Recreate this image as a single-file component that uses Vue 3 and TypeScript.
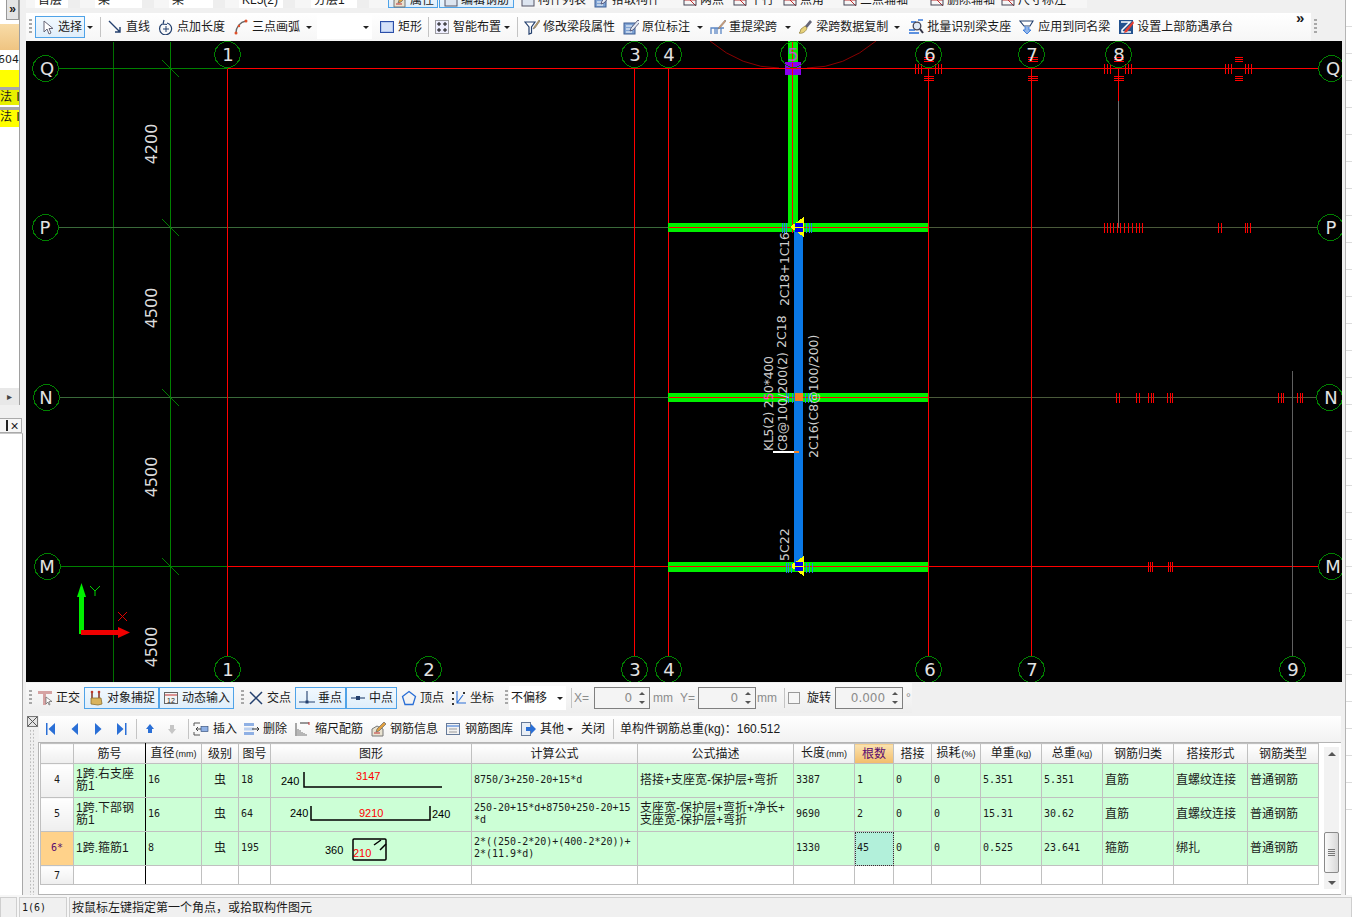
<template>
  <div class="app">
    <div class="body">
      <!-- left dock, mostly cut off by the window -->
      <aside class="rail">
        <div class="rail-top">
          <div class="rail-btn">»</div>
          <div class="rail-orange"></div>
          <div class="rail-num">604:</div>
          <div class="rail-yellow"></div>
          <div class="rail-law">法Ⅰ</div>
          <div class="rail-law">法Ⅰ</div>
          <div class="rail-fill"></div>
          <div class="rail-arrow">▸</div>
        </div>
        <div class="rail-tabs"><span class="rail-pin"></span><span class="rail-x">×</span></div>
        <div class="rail-panel"></div>
      </aside>

      <main class="main">
        <!-- toolbar above, only its bottom edge is in view -->
        <div class="cut-bar">
          <div class="cut-inner">
            <template v-for="(t, i) in topItems" :key="i">
              <div v-if="t.k === 'combo'" class="cut-combo" :style="{ marginLeft: t.ml + 'px', width: t.w + 'px' }">
                <span>{{ t.label }}</span><i></i>
              </div>
              <div v-else-if="t.k === 'btn'" class="tool on" :style="{ marginLeft: t.ml + 'px', width: t.w + 'px' }">
                <svg class="ico" viewBox="0 0 16 16" v-html="icons[t.icon!]"></svg><span>{{ t.label }}</span>
              </div>
              <div v-else class="tool" :style="{ marginLeft: t.ml + 'px' }">
                <svg class="ico" viewBox="0 0 16 16" v-html="icons[t.icon!]"></svg><span>{{ t.label }}</span>
              </div>
            </template>
          </div>
        </div>

        <div class="draw-wrap">
          <div class="bar draw-bar">
            <template v-for="(t, i) in drawItems" :key="i">
              <i v-if="t.k === 'grip'" class="grip" :style="{ marginLeft: t.ml + 'px' }"></i>
              <i v-else-if="t.k === 'sep'" class="sep" :style="{ marginLeft: t.ml + 'px' }"></i>
              <i v-else-if="t.k === 'caret'" class="caret" :style="{ marginLeft: t.ml + 'px' }"></i>
              <div v-else-if="t.k === 'combo'" class="combo" :style="{ marginLeft: t.ml + 'px', width: t.w + 'px' }"><span>{{ t.label }}</span><i class="caret"></i></div>
              <div v-else class="tool" :class="{ on: t.k === 'btn' }" :style="{ marginLeft: t.ml + 'px', width: t.w ? t.w + 'px' : undefined }">
                <svg class="ico" viewBox="0 0 16 16" v-html="icons[t.icon!]"></svg><span>{{ t.label }}</span>
              </div>
            </template>
            <span class="more">»</span>
          </div>
          <i class="grip end-grip"></i>
        </div>

        <!-- drawing area: coordinates in the viewBox are the page coordinates -->
        <svg class="cad" width="1316" height="641" viewBox="26 41 1316 641" shape-rendering="crispEdges">
          <rect x="26" y="41" width="1316" height="641" fill="#000" />

          <path d="M710 41 Q742 68 779 68 M807 68 Q844 68 876 41" fill="none" stroke="#8a0000" shape-rendering="auto" />

          <g transform="translate(.5 .5)">
            <line v-for="(l, i) in gridLines" :key="'g' + i" :x1="l[0]" :y1="l[1]" :x2="l[2]" :y2="l[3]" :stroke="l[4] as string" />
            <line v-for="y in [68, 227, 397, 566]" :key="'c' + y" x1="162" :y1="y - 8" x2="179" :y2="y + 9" stroke="#008000" />
          </g>

          <!-- beams -->
          <rect v-for="y in [223, 393, 562]" :key="'b' + y" x="668" :y="y" width="260" :height="y === 562 ? 10 : 9" fill="#00f000" />
          <rect x="788" y="41" width="10" height="186" fill="#00f000" />
          <g transform="translate(.5 .5)">
            <line v-for="y in [227, 397, 566]" :key="'r' + y" x1="668" :y1="y" x2="928" :y2="y" stroke="#ff0000" />
            <line x1="792" y1="41" x2="792" y2="232" stroke="#ff0000" />
          </g>
          <rect x="794" y="231" width="9" height="335" fill="#0a78e6" />
          <rect x="785" y="62" width="16" height="13" fill="#8a00f0" />
          <g transform="translate(.5 .5)">
            <line x1="785" y1="68" x2="801" y2="68" stroke="#ff0000" />
            <line x1="792" y1="62" x2="792" y2="75" stroke="#ff0000" />
          </g>
          <rect x="795" y="393" width="8" height="8" fill="#f58220" />
          <rect x="773" y="451" width="21" height="2" fill="#fff" />
          <rect x="794" y="451" width="5" height="2" fill="#f58220" />

          <g v-for="(j, i) in joints" :key="'j' + i">
            <polygon :points="`${j.x + 11},${j.y - 10} ${j.x + 11},${j.y + 10} ${j.x - 3},${j.y}`" fill="#ffff00" />
            <rect :x="j.x + 2" :y="j.y - 4" width="8" height="9" fill="#0000f0" />
            <rect :x="j.x + 2" :y="j.y" width="8" height="1" fill="#ffff00" />
          </g>
          <g transform="translate(.5 .5)">
            <line v-for="(l, i) in blueTicks" :key="'t' + i" :x1="l[0]" :y1="l[1]" :x2="l[0]" :y2="l[1] + 10" stroke="#2080e0" />
            <!-- red seat marks on the axes -->
            <line v-for="(l, i) in redTicks" :key="'rt' + i" :x1="l[0]" :y1="l[1]" :x2="l[2]" :y2="l[3]" stroke="#ff0000" />
            <!-- axis bubbles -->
            <polygon v-for="(a, i) in bubbles" :key="'a' + i" :points="ring(a.x, a.y)" fill="none" stroke="#008000" />
          </g>
          <text v-for="(a, i) in bubbles" :key="'at' + i" class="bubble" :x="a.tx ?? a.x" :y="a.y + 6.5" :fill="a.c ?? '#e2e2e2'">{{ a.t }}</text>

          <!-- dimensions -->
          <text v-for="d in dims" :key="d.y" class="dim" transform="rotate(-90)" :x="-d.y" y="157">{{ d.t }}</text>

          <!-- rebar labels -->
          <text v-for="(b, i) in beamLabels" :key="'l' + i" class="beam-label" :textLength="b.len" :transform="`translate(${b.x} ${b.y}) rotate(-90)`">{{ b.t }}</text>
          <text class="beam-label" textLength="95" transform="translate(773 451) rotate(-90)">KL5(2) 2<tspan fill="#ff3fd0">5</tspan>0*400</text>

          <!-- user coordinate marker -->
          <g shape-rendering="auto">
            <rect x="79" y="592" width="5" height="42" fill="#00f000" />
            <polygon points="81.5,583 86,597 77,597" fill="#00f000" />
            <rect x="81" y="630" width="38" height="5" fill="#f00000" />
            <polygon points="130,632.5 118,627 118,638" fill="#f00000" />
            <path d="M90 586l5 5 5-5M95 591v5" fill="none" stroke="#00d000" />
            <path d="M118 612l9 9M127 612l-9 9" fill="none" stroke="#e00000" />
          </g>
        </svg>

        <div class="snap-row">
          <div class="bar snap-bar">
            <template v-for="(t, i) in snapItems" :key="i">
              <i v-if="t.k === 'grip'" class="grip" :style="{ marginLeft: t.ml + 'px' }"></i>
              <i v-else-if="t.k === 'sep'" class="sep" :style="{ marginLeft: t.ml + 'px' }"></i>
              <div v-else-if="t.k === 'combo'" class="combo" :style="{ marginLeft: t.ml + 'px', width: t.w + 'px' }"><span>{{ t.label }}</span><i class="caret"></i></div>
              <div v-else-if="t.k === 'input'" class="spin" :style="{ marginLeft: t.ml + 'px', width: t.w + 'px' }">
                <span>{{ t.label }}</span>
                <div class="spin-arrows"><i></i><i></i></div>
              </div>
              <span v-else-if="t.k === 'gray'" class="gray" :style="{ marginLeft: t.ml + 'px' }">{{ t.label }}</span>
              <span v-else-if="t.k === 'text'" class="plain" :style="{ marginLeft: t.ml + 'px' }">{{ t.label }}</span>
              <i v-else-if="t.k === 'check'" class="check" :style="{ marginLeft: t.ml + 'px' }"></i>
              <div v-else class="tool" :class="{ on: t.k === 'btn' }" :style="{ marginLeft: t.ml + 'px', width: t.w ? t.w + 'px' : undefined }">
                <svg class="ico" viewBox="0 0 16 16" v-html="icons[t.icon!]"></svg><span>{{ t.label }}</span>
              </div>
            </template>
          </div>
        </div>

        <section class="rebar">
          <div class="gutter">
            <svg class="gutter-x" viewBox="0 0 11 11"><rect x=".5" y=".5" width="10" height="10" fill="#e4e4e4" stroke="#777" /><path d="M1 1l9 9M10 1l-9 9" stroke="#555" fill="none" /></svg>
            <div class="gutter-dots"></div>
          </div>
          <div class="rebar-body">
            <div class="bar rebar-bar">
              <template v-for="(t, i) in rebarItems" :key="i">
                <i v-if="t.k === 'sep'" class="sep" :style="{ marginLeft: t.ml + 'px' }"></i>
                <i v-else-if="t.k === 'caret'" class="caret" :style="{ marginLeft: t.ml + 'px' }"></i>
                <span v-else-if="t.k === 'text'" class="plain" :style="{ marginLeft: t.ml + 'px' }">{{ t.label }}</span>
                <div v-else class="tool" :style="{ marginLeft: t.ml + 'px' }">
                  <svg class="ico" viewBox="0 0 16 16" v-html="icons[t.icon!]"></svg><span v-if="t.label">{{ t.label }}</span>
                </div>
              </template>
            </div>

            <div class="grid-frame">
              <table class="grid">
                <colgroup>
                  <col v-for="(w, i) in colWidths" :key="i" :style="{ width: w + 'px' }" />
                </colgroup>
                <thead>
                  <tr>
                    <th></th>
                    <th class="dark-r">筋号</th>
                    <th>直径<small>(mm)</small></th>
                    <th>级别</th>
                    <th>图号</th>
                    <th>图形</th>
                    <th>计算公式</th>
                    <th>公式描述</th>
                    <th>长度<small>(mm)</small></th>
                    <th class="hot">根数</th>
                    <th>搭接</th>
                    <th>损耗<small>(%)</small></th>
                    <th>单重<small>(kg)</small></th>
                    <th>总重<small>(kg)</small></th>
                    <th>钢筋归类</th>
                    <th>搭接形式</th>
                    <th>钢筋类型</th>
                  </tr>
                </thead>
                <tbody>
                  <tr v-for="r in rows" :key="r.id" class="data-row">
                    <td class="idx" :class="{ current: r.current }">{{ r.current ? r.id + '*' : r.id }}</td>
                    <td class="name dark-r">{{ r.name }}</td>
                    <td class="num">{{ r.dia }}</td>
                    <td class="grade">虫</td>
                    <td class="num">{{ r.fig }}</td>
                    <td class="shape">
                      <svg v-if="r.id === 4" width="200" height="33" viewBox="271 763 200 33">
                        <text class="s-black" x="281" y="784">240</text>
                        <path d="M304 771v15h138" fill="none" stroke="#000" stroke-width="1.5" />
                        <text class="s-red" x="356" y="779">3147</text>
                      </svg>
                      <svg v-if="r.id === 5" width="200" height="33" viewBox="271 797 200 33">
                        <text class="s-black" x="290" y="816">240</text>
                        <path d="M311 805v14h119v-14" fill="none" stroke="#000" stroke-width="1.5" />
                        <text class="s-red" x="359" y="816">9210</text>
                        <text class="s-black" x="432" y="817">240</text>
                      </svg>
                      <svg v-if="r.id === 6" width="200" height="33" viewBox="271 831 200 33">
                        <text class="s-black" x="325" y="853">360</text>
                        <rect x="353" y="838" width="33" height="21" rx="1" fill="none" stroke="#000" stroke-width="1.5" />
                        <path d="M374 844l7-5M380 849l6-6" fill="none" stroke="#000" stroke-width="1.5" />
                        <text class="s-red" x="353" y="856">210</text>
                      </svg>
                    </td>
                    <td class="formula">{{ r.formula }}</td>
                    <td class="desc">{{ r.desc }}</td>
                    <td class="num">{{ r.len }}</td>
                    <td class="num" :class="{ picked: r.current }">{{ r.count }}</td>
                    <td class="num">0</td>
                    <td class="num">0</td>
                    <td class="num">{{ r.unit }}</td>
                    <td class="num">{{ r.total }}</td>
                    <td class="cn">{{ r.kind }}</td>
                    <td class="cn">{{ r.joint }}</td>
                    <td class="cn">普通钢筋</td>
                  </tr>
                  <tr class="blank-row">
                    <td class="idx">7</td>
                    <td class="dark-r"></td>
                    <td v-for="n in 15" :key="n"></td>
                  </tr>
                </tbody>
              </table>
              <div class="vscroll">
                <i class="up"></i>
                <div class="thumb"><b></b></div>
                <i class="down"></i>
              </div>
            </div>
          </div>
        </section>
      </main>

      <aside class="right-rail"><i v-for="n in 30" :key="n"></i></aside>
    </div>

    <footer class="status">
      <div class="seg seg-a"></div>
      <div class="seg seg-b">1(6)</div>
      <div class="seg seg-c">按鼠标左键指定第一个角点，或拾取构件图元</div>
    </footer>
  </div>
</template>

<script setup lang="ts">
interface Item {
  k: string
  ml: number
  w?: number
  icon?: string
  label?: string
}

const navy = '#24406e'
const blue = '#2a6fd6'

// small toolbar pictures, all drawn on a 16x16 box
const icons: Record<string, string> = {
  cursor: '<path d="M5 2v11l3-3 2 5 2-1-2-4.500h4z" fill="#fff" stroke="#667"/>',
  line: `<path d="M2 2l11 11M13 8v5H8" fill="none" stroke="${navy}" stroke-width="1.400"/>`,
  addlen: `<path d="M4 5A6 6 0 1 0 9 4M6 1L5 5l4 .5" fill="none" stroke="${navy}" stroke-width="1.200"/><path d="M8 7v6M5 10h6" stroke="${navy}"/>`,
  arc: '<path d="M3 14C3 8 7 3 13 2" fill="none" stroke="#666" stroke-width="1.400"/><circle cx="3" cy="14" r="1.500" fill="#e0502a"/><circle cx="13" cy="2" r="1.500" fill="#e0502a"/><circle cx="6" cy="7" r="1.200" fill="#e0502a"/>',
  rect: '<rect x="1.500" y="2.500" width="13" height="11" fill="#b4c9f0" stroke="#2c4fa8"/><rect x="3" y="4" width="10" height="8" fill="#d5e1f8"/>',
  smart: '<rect x="1.500" y="1.500" width="13" height="13" fill="#eef" stroke="#444" stroke-dasharray="1 1"/><path d="M5 3v4M3 5h4M11 3v4M9 5h4M5 9v4M3 11h4M11 9v4M9 11h4" stroke="#111"/>',
  funnel: `<path d="M1 3h10L7.500 8v6L5 15V8z" fill="#fff" stroke="${navy}" stroke-width="1.200"/><path d="M15 1l-5 7-1 2 2-1 5-7z" fill="#c9a15c" stroke="#666" stroke-width=".6"/>`,
  mark: '<rect x="1" y="4" width="11" height="11" fill="#7fa3d4" stroke="#3f5f94"/><path d="M3 7h6M3 10h6M3 13h6" stroke="#fff"/><path d="M15 1L8 9l-1 3 3-1 7-8z" fill="#e4eaf4" stroke="#446" stroke-width=".8"/>',
  respan: '<path d="M1 15V9h4v6M7 15V9h4v6M1 9h13" fill="none" stroke="#5b86c4" stroke-width="1.300"/><path d="M15 1L9 8l-1 2 2-1 6-7z" fill="#e0a070" stroke="#777" stroke-width=".6"/>',
  brush: '<path d="M13 1l2 2-5 6-2-2z" fill="#667"/><path d="M8 7l2 2c-1 4-5 6-8 5 2-1 1-3 2-4z" fill="#e8d27a" stroke="#8a7a3a" stroke-width=".7"/>',
  batch: `<path d="M1 14h10M1 11h6M3 3h5" stroke="${blue}" stroke-width="1.400"/><circle cx="9" cy="7" r="3.800" fill="#dfe8f4" stroke="#445" stroke-width="1.300"/><path d="M12 10l3 4" stroke="#334" stroke-width="2"/><path d="M10 1h5" stroke="${blue}" stroke-width="1.400"/>`,
  same: `<path d="M1 2h13l-3 5H5z" fill="#fff" stroke="${navy}" stroke-width="1.100"/><path d="M6 7v4H4l4 4 4-4h-2V8" fill="#8fb4ea" stroke="${blue}" stroke-width=".8"/>`,
  top: '<rect x="1" y="1" width="14" height="14" fill="#23528f"/><path d="M3 3h9L4 11v2h9" fill="none" stroke="#fff" stroke-width="1.500"/><path d="M15 2L7 11l-1 3 3-1 7-9z" fill="#e23b30"/>',
  ortho: '<path d="M1 1h14v3H9v11H6V4H1z" fill="#d6a3a3"/><path d="M9 7v7l2-2 1 3 1-.5-1-3h3z" fill="#fff" stroke="#666" stroke-width=".7"/>',
  magnet: '<path d="M4 1v7M11 1v7" stroke="#8a4030" stroke-width="1.600"/><circle cx="4" cy="2" r="1.300" fill="#c0392b"/><circle cx="11" cy="2" r="1.300" fill="#c0392b"/><path d="M3 8h10l1 6-4 1-7-1z" fill="#d9b35c" stroke="#8a6f2f" stroke-width=".8"/>',
  dyn: '<rect x="1.500" y="2.500" width="13" height="11" fill="#f4f4f4" stroke="#666"/><path d="M2 5h12" stroke="#c03030"/><text x="8" y="12.500" text-anchor="middle" font-size="7" font-family="Liberation Sans" fill="#222">12</text>',
  cross: `<path d="M2 2l12 12M14 2L2 14" stroke="${navy}" stroke-width="1.500"/>`,
  foot: `<path d="M8 1v11M0 12h16" stroke="${navy}" stroke-width="1.100"/><rect x="6.500" y="10.500" width="3" height="3" fill="${navy}"/>`,
  mid: `<path d="M1 8h14" stroke="${navy}" stroke-width="1.100"/><rect x="6" y="6" width="4" height="4" fill="${navy}"/>`,
  apex: `<path d="M8 1.500l6.500 5-2.500 8H4L1.500 6.500z" fill="none" stroke="${blue}" stroke-width="1.300"/>`,
  coord: `<path d="M6 1v12h9M6 13l6-8" fill="none" stroke="${blue}" stroke-width="1.100"/><g fill="#333"><rect x="1" y="2" width="2" height="2"/><rect x="1" y="8" width="2" height="2"/><rect x="1" y="13" width="2" height="2"/><rect x="12" y="2" width="2" height="2"/></g>`,
  first: `<path d="M4 2h1.500v12H4zM13 2v12L6.500 8z" fill="${blue}"/>`,
  prev: `<path d="M11 2v12L4.500 8z" fill="${blue}"/>`,
  next: `<path d="M5 2v12l6.500-6z" fill="${blue}"/>`,
  last: `<path d="M11 2h1.500v12H11zM3 2v12l6.500-6z" fill="${blue}"/>`,
  up: `<path d="M8 3l4 5h-2v4H6V8H4z" fill="${blue}"/>`,
  down: '<path d="M8 13l4-5h-2V4H6v4H4z" fill="#c6c6c6"/>',
  insert: `<path d="M1 2h6M1 14h6M1 2v3M1 11v3" stroke="#555" fill="none"/><path d="M8 8H3M5 6L3 8l2 2" stroke="#444" fill="none"/><rect x="8" y="5.500" width="7" height="5" fill="#8fb0e4" stroke="${navy}" stroke-width=".6"/>`,
  remove: '<rect x="1" y="2" width="10" height="3" fill="#8fb0e4"/><rect x="1" y="6.500" width="10" height="3" fill="#bcd0ee"/><rect x="1" y="11" width="10" height="3" fill="#8fb0e4"/><path d="M9 8h7M14 6l2 2-2 2" stroke="#333" fill="none"/>',
  scale: '<path d="M1 2v13" fill="none" stroke="#555"/><path d="M3 15V8M5 15V9M7 15v-4M9 15v-3M11 15v-2" stroke="#777"/><path d="M5 2h9" stroke="#333"/><path d="M14 1v3" stroke="#c03030"/>',
  info: '<path d="M2 15V8l5-3 6 3v7z" fill="#e8e2d0" stroke="#777"/><path d="M14 1L7 8l-1 3 3-1 7-7z" fill="#e0a040" stroke="#666" stroke-width=".7"/><path d="M4 12h6" stroke="#c03030"/>',
  lib: `<rect x="1.500" y="2.500" width="13" height="11" fill="#f2f2f2" stroke="#667a99"/><path d="M2 5h12" stroke="${blue}"/><path d="M4 8h8M4 11h8" stroke="#999"/>`,
  other: `<rect x="1.500" y="1.500" width="9" height="13" fill="#e8eef6" stroke="#667a99"/><path d="M6 6h5V3l5 5-5 5v-3H6z" fill="${blue}"/>`,
  thin: '<rect x="2" y="2" width="12" height="12" fill="#dde5f0" stroke="#556"/>',
  draw: '<path d="M2 2l12 12M2 8h12" stroke="#c03030"/><rect x="2" y="3" width="12" height="10" fill="none" stroke="#445"/>',
}

const topItems: Item[] = [
  { k: 'combo', ml: 9, w: 45, label: '首层' },
  { k: 'combo', ml: 15, w: 59, label: '梁' },
  { k: 'combo', ml: 15, w: 56, label: '梁' },
  { k: 'combo', ml: 14, w: 56, label: 'KL5(2)' },
  { k: 'combo', ml: 16, w: 58, label: '分层1' },
  { k: 'btn', ml: 19, w: 50, icon: 'info', label: '属性' },
  { k: 'btn', ml: 1, w: 75, icon: 'thin', label: '编辑钢筋' },
  { k: 'tool', ml: 6, icon: 'thin', label: '构件列表' },
  { k: 'tool', ml: 8, icon: 'mark', label: '拾取构件' },
  { k: 'tool', ml: 22, icon: 'draw', label: '两点' },
  { k: 'tool', ml: 8, icon: 'draw', label: '平行' },
  { k: 'tool', ml: 8, icon: 'draw', label: '点角' },
  { k: 'tool', ml: 18, icon: 'draw', label: '三点辅轴' },
  { k: 'tool', ml: 21, icon: 'draw', label: '删除辅轴' },
  { k: 'tool', ml: 5, icon: 'draw', label: '尺寸标注' },
]

const drawItems: Item[] = [
  { k: 'grip', ml: 3 },
  { k: 'btn', ml: 3, w: 50, icon: 'cursor', label: '选择' },
  { k: 'caret', ml: 2 },
  { k: 'sep', ml: 7 },
  { k: 'tool', ml: 6, icon: 'line', label: '直线' },
  { k: 'tool', ml: 8, icon: 'addlen', label: '点加长度' },
  { k: 'tool', ml: 8, icon: 'arc', label: '三点画弧' },
  { k: 'caret', ml: 6 },
  { k: 'combo', ml: 5, w: 55, label: '' },
  { k: 'tool', ml: 7, icon: 'rect', label: '矩形' },
  { k: 'sep', ml: 6 },
  { k: 'tool', ml: 5, icon: 'smart', label: '智能布置' },
  { k: 'caret', ml: 3 },
  { k: 'sep', ml: 7 },
  { k: 'tool', ml: 6, icon: 'funnel', label: '修改梁段属性' },
  { k: 'tool', ml: 8, icon: 'mark', label: '原位标注' },
  { k: 'caret', ml: 7 },
  { k: 'tool', ml: 7, icon: 'respan', label: '重提梁跨' },
  { k: 'caret', ml: 8 },
  { k: 'tool', ml: 6, icon: 'brush', label: '梁跨数据复制' },
  { k: 'caret', ml: 6 },
  { k: 'tool', ml: 8, icon: 'batch', label: '批量识别梁支座' },
  { k: 'tool', ml: 8, icon: 'same', label: '应用到同名梁' },
  { k: 'tool', ml: 8, icon: 'top', label: '设置上部筋遇承台' },
]

const snapItems: Item[] = [
  { k: 'grip', ml: 3 },
  { k: 'tool', ml: 5, icon: 'ortho', label: '正交' },
  { k: 'btn', ml: 4, w: 75, icon: 'magnet', label: '对象捕捉' },
  { k: 'btn', ml: 0, w: 75, icon: 'dyn', label: '动态输入' },
  { k: 'grip', ml: 7 },
  { k: 'tool', ml: 4, icon: 'cross', label: '交点' },
  { k: 'btn', ml: 4, w: 51, icon: 'foot', label: '垂点' },
  { k: 'btn', ml: 0, w: 51, icon: 'mid', label: '中点' },
  { k: 'tool', ml: 4, icon: 'apex', label: '顶点' },
  { k: 'tool', ml: 7, icon: 'coord', label: '坐标' },
  { k: 'grip', ml: 11 },
  { k: 'combo', ml: 1, w: 57, label: '不偏移' },
  { k: 'sep', ml: 5 },
  { k: 'gray', ml: 2, label: 'X=' },
  { k: 'input', ml: 5, w: 56, label: '0' },
  { k: 'gray', ml: 3, label: 'mm' },
  { k: 'gray', ml: 7, label: 'Y=' },
  { k: 'input', ml: 3, w: 58, label: '0' },
  { k: 'gray', ml: 1, label: 'mm' },
  { k: 'sep', ml: 7 },
  { k: 'check', ml: 3 },
  { k: 'text', ml: 7, label: '旋转' },
  { k: 'input', ml: 4, w: 68, label: '0.000' },
  { k: 'gray', ml: 3, label: '°' },
]

const rebarItems: Item[] = [
  { k: 'tool', ml: 3, icon: 'first' },
  { k: 'tool', ml: 9, icon: 'prev' },
  { k: 'tool', ml: 7, icon: 'next' },
  { k: 'tool', ml: 8, icon: 'last' },
  { k: 'sep', ml: 6 },
  { k: 'tool', ml: 5, icon: 'up' },
  { k: 'tool', ml: 6, icon: 'down' },
  { k: 'sep', ml: 8 },
  { k: 'tool', ml: 4, icon: 'insert', label: '插入' },
  { k: 'tool', ml: 6, icon: 'remove', label: '删除' },
  { k: 'tool', ml: 8, icon: 'scale', label: '缩尺配筋' },
  { k: 'tool', ml: 7, icon: 'info', label: '钢筋信息' },
  { k: 'tool', ml: 7, icon: 'lib', label: '钢筋图库' },
  { k: 'tool', ml: 7, icon: 'other', label: '其他' },
  { k: 'caret', ml: 3 },
  { k: 'text', ml: 8, label: '关闭' },
  { k: 'sep', ml: 8 },
  { k: 'text', ml: 6, label: '单构件钢筋总重(kg)：160.512' },
]

const red = '#ff0000'
const olive = '#4a5a3a'
const gridLines: (number | string)[][] = [
  [113, 41, 113, 682, '#007000'],
  [170, 41, 170, 682, '#008000'],
  [58, 68, 227, 68, '#008000'],
  [227, 68, 1318, 68, red],
  [58, 227, 668, 227, '#3a6a3a'],
  [928, 227, 1317, 227, olive],
  [59, 397, 668, 397, '#3a6a3a'],
  [928, 397, 1316, 397, olive],
  [60, 566, 227, 566, '#008000'],
  [227, 566, 1318, 566, red],
  [227, 68, 227, 656, red],
  [634, 68, 634, 656, red],
  [668, 68, 668, 656, red],
  [928, 68, 928, 656, red],
  [1031, 68, 1031, 656, red],
  [1118, 68, 1118, 100, red],
  [1118, 100, 1118, 227, '#707070'],
  [1292, 370, 1292, 656, '#606060'],
]

const joints = [
  { x: 793, y: 227 },
  { x: 793, y: 566 },
]

const blueTicks: number[][] = [
  ...[782, 784, 786, 806, 809, 811].map((x) => [x, 222]),
  ...[786, 788, 792, 805, 808, 811].map((x) => [x, 392]),
  ...[786, 788, 791, 806, 809, 812].map((x) => [x, 562]),
]

// three short strokes across an axis, the reinforcement symbol in the plan
function strokesAcross(xs: number[], y: number, half = 5) {
  return xs.map((x) => [x, y - half, x, y + half])
}
function strokesAlong(cx: number, ys: number[], half = 5) {
  return ys.map((y) => [cx - half, y, cx + half, y])
}

const capY = [57, 59, 61, 76, 78, 80]
const redTicks: number[][] = [
  ...strokesAcross([915, 918, 921, 935, 938, 941], 68),
  ...strokesAlong(928, capY),
  ...strokesAlong(1032, capY),
  ...strokesAcross([1104, 1107, 1110, 1125, 1128, 1131], 68),
  ...strokesAlong(1118, capY),
  ...strokesAcross([1225, 1228, 1231, 1245, 1248, 1251], 68),
  ...strokesAlong(1238, capY, 4),
  ...strokesAcross([1104, 1107, 1110, 1113, 1117, 1120, 1124, 1128, 1132, 1136, 1139, 1142], 227),
  ...strokesAcross([1218, 1221, 1245, 1247, 1250], 227),
  ...strokesAcross([1116, 1119, 1136, 1139, 1148, 1151, 1153, 1167, 1170, 1172, 1278, 1281, 1283, 1297, 1300, 1302], 397),
  ...strokesAcross([1148, 1150, 1152, 1168, 1170, 1172], 566),
]

const bubbles: { x: number; y: number; t: string; tx?: number; c?: string }[] = [
  { x: 45, y: 68, t: 'Q', tx: 47 },
  { x: 45, y: 227, t: 'P' },
  { x: 46, y: 397, t: 'N' },
  { x: 47, y: 566, t: 'M' },
  { x: 1331, y: 68, t: 'Q', tx: 1333 },
  { x: 1330, y: 227, t: 'P', tx: 1331 },
  { x: 1329, y: 397, t: 'N', tx: 1331 },
  { x: 1331, y: 566, t: 'M', tx: 1333 },
  { x: 227, y: 54, t: '1', tx: 228 },
  { x: 634, y: 54, t: '3', tx: 635 },
  { x: 668, y: 54, t: '4', tx: 669 },
  { x: 793, y: 54, t: '5', c: '#b060c8' },
  { x: 928, y: 54, t: '6', tx: 930 },
  { x: 1031, y: 54, t: '7', tx: 1032 },
  { x: 1118, y: 54, t: '8', tx: 1119 },
  { x: 227, y: 669, t: '1', tx: 228 },
  { x: 428, y: 669, t: '2', tx: 429 },
  { x: 634, y: 669, t: '3', tx: 635 },
  { x: 668, y: 669, t: '4', tx: 669 },
  { x: 928, y: 669, t: '6', tx: 930 },
  { x: 1031, y: 669, t: '7', tx: 1032 },
  { x: 1292, y: 669, t: '9', tx: 1293 },
]

// the CAD view draws its circles with few segments
function ring(cx: number, cy: number, r = 13, sides = 14) {
  const pts: string[] = []
  for (let i = 0; i < sides; i++) {
    const a = (i / sides) * Math.PI * 2
    pts.push(`${(cx + r * Math.cos(a)).toFixed(1)},${(cy + r * Math.sin(a)).toFixed(1)}`)
  }
  return pts.join(' ')
}

const dims = [
  { y: 144, t: '4200' },
  { y: 308, t: '4500' },
  { y: 477, t: '4500' },
  { y: 647, t: '4500' },
]

const beamLabels: { x: number; y: number; t: string; len?: number }[] = [
  { x: 789, y: 306, t: '2C18+1C16', len: 74 },
  { x: 786, y: 348, t: '2C18' },
  { x: 787, y: 451, t: 'C8@100/200(2)' },
  { x: 818, y: 458, t: '2C16(C8@100/200)' },
  { x: 789, y: 561, t: '5C22' },
]

const colWidths = [33, 72, 56, 37, 32, 201, 166, 156, 61, 39, 38, 49, 61, 61, 71, 74, 71]

const rows = [
  {
    id: 4,
    name: '1跨.右支座筋1',
    dia: '16',
    fig: '18',
    formula: '8750/3+250-20+15*d',
    desc: '搭接+支座宽-保护层+弯折',
    len: '3387',
    count: '1',
    unit: '5.351',
    total: '5.351',
    kind: '直筋',
    joint: '直螺纹连接',
  },
  {
    id: 5,
    name: '1跨.下部钢筋1',
    dia: '16',
    fig: '64',
    formula: '250-20+15*d+8750+250-20+15*d',
    desc: '支座宽-保护层+弯折+净长+支座宽-保护层+弯折',
    len: '9690',
    count: '2',
    unit: '15.31',
    total: '30.62',
    kind: '直筋',
    joint: '直螺纹连接',
  },
  {
    id: 6,
    current: true,
    name: '1跨.箍筋1',
    dia: '8',
    fig: '195',
    formula: '2*((250-2*20)+(400-2*20))+2*(11.9*d)',
    desc: '',
    len: '1330',
    count: '45',
    unit: '0.525',
    total: '23.641',
    kind: '箍筋',
    joint: '绑扎',
  },
]
</script>

<style scoped>
.app {
  width: 1352px;
  height: 917px;
  display: flex;
  flex-direction: column;
  overflow: hidden;
  background: #f0f0f0;
  color: #1a1a1a;
  font: 12px/16px "Liberation Sans", "Noto Sans CJK SC", sans-serif;
}
.body {
  display: flex;
  height: 895px;
}

/* left dock */
.rail {
  width: 26px;
  flex: none;
  display: flex;
  flex-direction: column;
}
.rail-top {
  width: 20px;
  height: 405px;
  display: flex;
  flex-direction: column;
  background: #fff;
  border-right: 1px solid #a0a0a0;
  box-sizing: border-box;
  overflow: hidden;
}
.rail-btn {
  height: 20px;
  margin-left: 6px;
  background: #e4e4e4;
  border: 1px solid #999;
  border-top: 0;
  text-align: center;
  font-weight: bold;
  line-height: 18px;
  box-sizing: border-box;
}
.rail-orange {
  height: 26px;
  margin-top: 4px;
  background: linear-gradient(#f8dca8, #efc481);
}
.rail-num {
  height: 20px;
  font: 11px/20px "DejaVu Sans", sans-serif;
  white-space: nowrap;
  margin-left: -2px;
}
.rail-yellow {
  height: 17px;
  background: #ffff00;
}
.rail-law {
  height: 15px;
  margin-top: 3px;
  line-height: 15px;
  background: #e8f000;
  white-space: nowrap;
  box-shadow: 0 -3px #a8a8a8;
}
.rail-law + .rail-law {
  height: 17px;
  margin-top: 5px;
  background: #ffff00;
}
.rail-fill {
  flex: 1;
}
.rail-arrow {
  height: 17px;
  background: #e8e8e8;
  text-align: center;
  font-size: 10px;
  line-height: 17px;
  color: #444;
}
.rail-tabs {
  width: 22px;
  height: 15px;
  margin-top: 13px;
  display: flex;
  align-items: center;
  justify-content: flex-end;
  gap: 2px;
  padding-right: 2px;
  box-sizing: border-box;
  background: #f6f6f6;
  border: 1px solid #aaa;
  border-left: 0;
}
.rail-pin {
  width: 2px;
  height: 11px;
  background: #222;
}
.rail-x {
  font-size: 14px;
  line-height: 12px;
  width: 9px;
  text-align: center;
}
.rail-panel {
  width: 23px;
  flex: 1;
  background: #fff;
  border-right: 1px solid #a8a8a8;
  border-top: 1px solid #c8c8c8;
  box-sizing: border-box;
}

.main {
  width: 1316px;
  flex: none;
  display: flex;
  flex-direction: column;
}

/* toolbars */
.cut-bar {
  height: 8px;
  margin-bottom: 5px;
  overflow: hidden;
  background: linear-gradient(90deg, #f6f6f6 1061px, #f0f0f0 1061px);
}
.cut-inner {
  display: flex;
  align-items: center;
  height: 28px;
  margin-top: -14px;
}
.cut-inner .tool {
  gap: 2px;
}
.cut-inner .tool.on {
  height: 16px;
}
.cut-combo {
  display: flex;
  justify-content: space-between;
  height: 28px;
  line-height: 28px;
  background: #fff;
  box-sizing: border-box;
  padding-left: 3px;
  flex: none;
}
.cut-combo i {
  width: 12px;
  background: #eee;
}
.draw-wrap {
  display: flex;
  align-items: stretch;
  height: 28px;
}
.bar {
  display: flex;
  align-items: center;
}
.draw-bar {
  width: 1285px;
  background: linear-gradient(#fff, #f6f6f6);
  position: relative;
}
.draw-bar .tool,
.snap-bar .tool {
  gap: 3px;
}
.more {
  position: absolute;
  left: 1270px;
  top: -3px;
  font-size: 15px;
  font-weight: bold;
}
.end-grip {
  margin: 0 0 0 3px;
  align-self: center;
}
.tool {
  display: flex;
  align-items: center;
  gap: 4px;
  flex: none;
  white-space: nowrap;
  height: 22px;
  box-sizing: border-box;
}
.tool.on {
  border: 1px solid #4fa3e8;
  background: linear-gradient(#f2f9fe, #dfeefb);
  padding-left: 3px;
}
.ico {
  width: 16px;
  height: 16px;
  flex: none;
}
.grip {
  flex: none;
  width: 3px;
  height: 16px;
  background: repeating-linear-gradient(#a8a8a8 0 2px, transparent 2px 4px);
}
.sep {
  flex: none;
  width: 1px;
  height: 20px;
  background: #c4c4c4;
}
.caret {
  flex: none;
  width: 0;
  height: 0;
  border-left: 3px solid transparent;
  border-right: 3px solid transparent;
  border-top: 3px solid #222;
}
.combo {
  flex: none;
  height: 24px;
  padding: 0 3px 0 2px;
  box-sizing: border-box;
  display: flex;
  align-items: center;
  justify-content: space-between;
  background: #fff;
}

.cad {
  display: block;
  flex: none;
}
.bubble {
  font: 18px "DejaVu Sans", sans-serif;
  text-anchor: middle;
}
.dim {
  font: 16px "DejaVu Sans", sans-serif;
  fill: #dcdcdc;
  text-anchor: middle;
}
.beam-label {
  font: 12.500px "DejaVu Sans", sans-serif;
  fill: #cfcfcf;
}

/* snap row */
.snap-row {
  height: 34px;
}
.snap-bar {
  width: 886px;
  height: 30px;
  margin-top: 1px;
  background: linear-gradient(#fafafa, #eeeeee);
}
.gray {
  flex: none;
  color: #8c8c8c;
  font-size: 12px;
}
.plain {
  flex: none;
  white-space: nowrap;
}
.spin {
  flex: none;
  height: 22px;
  box-sizing: border-box;
  border: 1px solid #7f7f7f;
  display: flex;
  align-items: center;
  justify-content: flex-end;
  color: #8c8c8c;
  font: 12px "DejaVu Sans", sans-serif;
  background: #f4f4f4;
}
.spin-arrows {
  width: 14px;
  height: 18px;
  margin-left: 3px;
  display: flex;
  flex-direction: column;
  align-items: center;
  justify-content: space-around;
}
.spin-arrows i {
  width: 0;
  height: 0;
  border-left: 3px solid transparent;
  border-right: 3px solid transparent;
  border-bottom: 3px solid #555;
}
.spin-arrows i + i {
  border-bottom: 0;
  border-top: 3px solid #555;
}
.check {
  flex: none;
  width: 10px;
  height: 10px;
  border: 1px solid #9a9a9a;
  background: #f6f6f6;
}

/* rebar panel */
.rebar {
  height: 179px;
  display: flex;
}
.gutter {
  width: 12px;
  flex: none;
  display: flex;
  flex-direction: column;
  align-items: center;
}
.gutter-x {
  width: 11px;
  height: 11px;
  flex: none;
}
.gutter-dots {
  width: 6px;
  flex: 1;
  margin-top: 2px;
  background-image: radial-gradient(#bcbcbc 1px, transparent 1px);
  background-size: 3px 3.500px;
}
.rebar-body {
  width: 1303px;
  flex: none;
  display: flex;
  flex-direction: column;
}
.rebar-bar {
  height: 26px;
  margin-left: 1px;
  background: linear-gradient(#fff, #f2f2f2);
  flex: none;
}
.rebar-bar .tool span,
.rebar-bar .plain {
  color: #1a1a1a;
}

.grid-frame {
  height: 153px;
  box-sizing: border-box;
  display: flex;
  background: #fff;
  border: 1px solid #b4b4b4;
  border-right: 0;
  padding-left: 1px;
}
.grid {
  width: 1278px;
  height: 140px;
  table-layout: fixed;
  border-collapse: collapse;
  flex: none;
}
.grid th,
.grid td {
  border: 1px solid #c0c0c0;
  padding: 0;
  overflow: hidden;
}
.grid th {
  height: 19px;
  font-weight: normal;
  text-align: center;
  line-height: 16px;
  background: linear-gradient(#fff, #eeeeee);
  white-space: nowrap;
}
.grid th small {
  font-size: 9px;
  margin-left: 1px;
}
.grid th.hot {
  background: linear-gradient(#fbe3b0, #f2bd6a);
  color: #5a0a6e;
}
.grid .dark-r {
  border-right: 1px solid #000;
}
.data-row td {
  height: 33px;
  background: #ccffd6;
  line-height: 12px;
}
.data-row td:not(.shape) {
  box-sizing: border-box;
  padding-bottom: 2px;
}
.blank-row td {
  height: 18px;
  background: #fff;
}
.grid td.idx {
  text-align: center;
  background: linear-gradient(#fff, #eeeeee);
  font: 10px "DejaVu Sans Mono", monospace;
}
.grid td.idx.current {
  background: #ffd28a;
  color: #5a0a6e;
}
.name,
.cn,
.desc {
  padding-left: 2px !important;
}
.desc {
  padding-right: 4px !important;
  line-break: anywhere;
}
.num,
.formula {
  font: 10px/12px "DejaVu Sans Mono", monospace;
  padding-left: 2px !important;
}
.formula {
  padding-right: 6px !important;
  word-break: break-all;
}
.grade {
  text-align: center;
}
.grid td.picked {
  background: #b2f0da;
  outline: 1px dotted #333;
  outline-offset: -1px;
}
.shape svg {
  display: block;
}
.s-black {
  font: 11px "Liberation Sans", sans-serif;
  fill: #000;
}
.s-red {
  font: 11px "Liberation Sans", sans-serif;
  fill: #ff0000;
}

.vscroll {
  width: 15px;
  flex: none;
  margin: 4px 0 0 5px;
  display: flex;
  flex-direction: column;
  align-items: center;
  background: #f2f2f2;
  height: 142px;
}
.vscroll i {
  flex: none;
  width: 0;
  height: 0;
  border-left: 4px solid transparent;
  border-right: 4px solid transparent;
}
.vscroll .up {
  border-bottom: 4px solid #555;
  margin-top: 5px;
}
.vscroll .down {
  border-top: 4px solid #555;
  margin-top: 8px;
}
.thumb {
  flex: none;
  width: 15px;
  height: 41px;
  margin-top: 76px;
  box-sizing: border-box;
  border: 1px solid #8a8a8a;
  border-radius: 2px;
  background: linear-gradient(90deg, #fafafa, #d8d8d8);
  display: flex;
  align-items: center;
  justify-content: center;
}
.thumb b {
  width: 7px;
  height: 7px;
  background: repeating-linear-gradient(#777 0 1px, transparent 1px 2px);
}

.right-rail {
  flex: 1;
  border-left: 1px solid #b4b4b4;
  margin-left: 3px;
  background: #fff;
  display: flex;
  flex-direction: column;
  overflow: hidden;
}
.right-rail i {
  flex: none;
  height: 26px;
  border-bottom: 1px solid #dcdcdc;
}

/* status line */
.status {
  height: 22px;
  display: flex;
  gap: 2px;
  padding-top: 2px;
  box-sizing: border-box;
  background: #f6f6f6;
  line-height: 20px;
}
.seg {
  box-sizing: border-box;
  border: 1px solid #cfcfcf;
  border-bottom: 0;
  background: #f0f0f0;
  padding-left: 2px;
}
.seg-a {
  width: 17px;
}
.seg-b {
  width: 48px;
  font: 10px/20px "DejaVu Sans Mono", monospace;
}
.seg-c {
  flex: 1;
}
</style>

<style>
html,
body {
  margin: 0;
  background: #f0f0f0;
}
</style>
